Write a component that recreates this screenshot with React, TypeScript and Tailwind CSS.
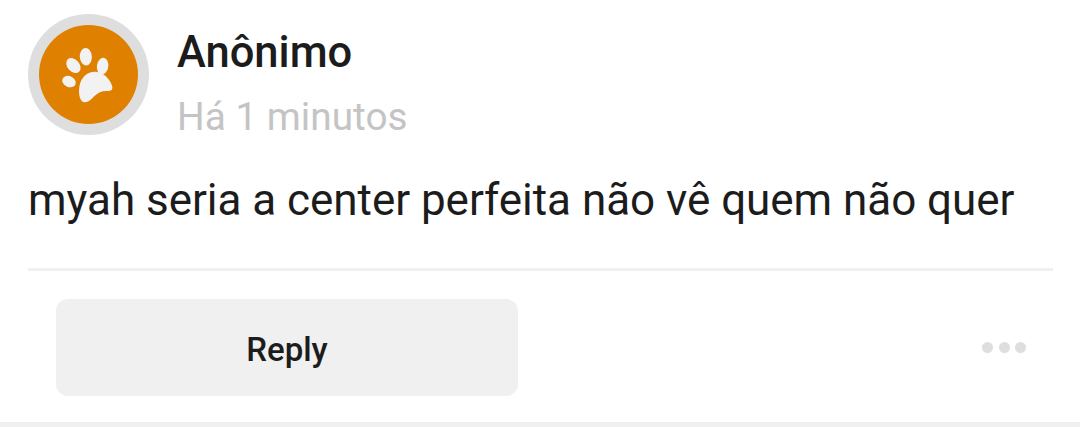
import React from 'react';

const PawIcon = () => (
  <svg viewBox="120 120 170 170" className="w-[57px] h-[57px]" fill="#f2f2f2">
    <ellipse cx="197" cy="152" rx="18" ry="26" transform="rotate(-3 197 152)" />
    <ellipse cx="160" cy="178" rx="18" ry="25" transform="rotate(-42 160 178)" />
    <ellipse cx="247" cy="180" rx="17" ry="25" transform="rotate(8 247 180)" />
    <ellipse cx="147" cy="226" rx="21" ry="16" transform="rotate(25 147 226)" />
    <path d="M178 240C182 214 202 196 226 197C250 199 268 218 275 238C279 250 272 255 262 254C246 253 234 258 222 270C212 281 201 291 190 287C177 281 175 258 178 240Z" />
  </svg>
);

export default function App() {
  return (
    <div className="w-[1080px] h-[427px] overflow-hidden bg-white font-['Roboto',sans-serif] flex flex-col">
      <div className="flex-1 pt-[14px] px-[27px]">
        <div className="flex items-start gap-[28px] pl-px">
          <div className="w-[121px] h-[121px] rounded-full bg-[#dedede] flex items-center justify-center shrink-0">
            <div className="w-[99px] h-[99px] rounded-full bg-[#e08000] flex items-center justify-center">
              <PawIcon />
            </div>
          </div>
          <div className="flex flex-col pt-[14px]">
            <div className="text-[43.5px] leading-[50px] font-medium text-[#1c1c1c]">Anônimo</div>
            <div className="text-[38.8px] leading-[44px] mt-[17px] text-[#c4c4c4]">Há 1 minutos</div>
          </div>
        </div>
        <p className="mt-[33px] pl-[1px] text-[44px] leading-[56px] tracking-[-0.04px] text-[#1c1c1c] whitespace-nowrap">
          myah seria a center perfeita não vê quem não quer
        </p>
        <div className="mt-[40px] ml-px h-[3px] bg-[#f0f0f0]" />
        <div className="flex items-center justify-between pl-[29px] pr-[27px] mt-[28px]">
          <button className="w-[462px] h-[97px] pt-[4px] rounded-[12px] bg-[#f0f0f0] text-[33px] font-medium text-[#1c1c1c]">
            Reply
          </button>
          <div className="flex gap-[5.5px]">
            <span className="w-[11px] h-[11px] rounded-full bg-[#dedede]" />
            <span className="w-[11px] h-[11px] rounded-full bg-[#dedede]" />
            <span className="w-[11px] h-[11px] rounded-full bg-[#dedede]" />
          </div>
        </div>
      </div>
      <div className="h-[5px] bg-[#f0f0f0]" />
    </div>
  );
}
